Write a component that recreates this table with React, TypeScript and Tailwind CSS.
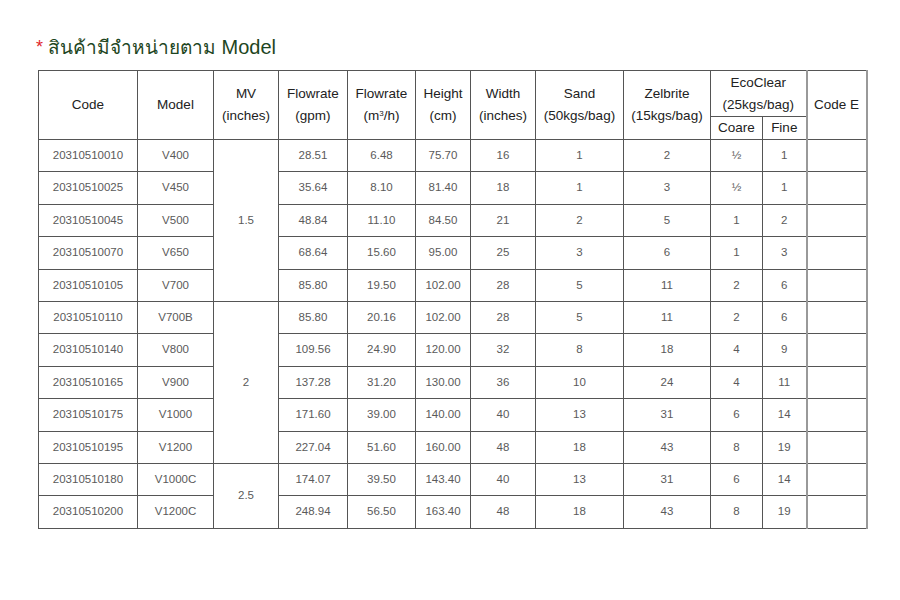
import React from 'react';

type Row = {
  code: string;
  model: string;
  gpm: string;
  m3h: string;
  height: string;
  width: string;
  sand: string;
  zel: string;
  coare: string;
  fine: string;
};

const ROWS: Row[] = [
  { code: '20310510010', model: 'V400', gpm: '28.51', m3h: '6.48', height: '75.70', width: '16', sand: '1', zel: '2', coare: '½', fine: '1' },
  { code: '20310510025', model: 'V450', gpm: '35.64', m3h: '8.10', height: '81.40', width: '18', sand: '1', zel: '3', coare: '½', fine: '1' },
  { code: '20310510045', model: 'V500', gpm: '48.84', m3h: '11.10', height: '84.50', width: '21', sand: '2', zel: '5', coare: '1', fine: '2' },
  { code: '20310510070', model: 'V650', gpm: '68.64', m3h: '15.60', height: '95.00', width: '25', sand: '3', zel: '6', coare: '1', fine: '3' },
  { code: '20310510105', model: 'V700', gpm: '85.80', m3h: '19.50', height: '102.00', width: '28', sand: '5', zel: '11', coare: '2', fine: '6' },
  { code: '20310510110', model: 'V700B', gpm: '85.80', m3h: '20.16', height: '102.00', width: '28', sand: '5', zel: '11', coare: '2', fine: '6' },
  { code: '20310510140', model: 'V800', gpm: '109.56', m3h: '24.90', height: '120.00', width: '32', sand: '8', zel: '18', coare: '4', fine: '9' },
  { code: '20310510165', model: 'V900', gpm: '137.28', m3h: '31.20', height: '130.00', width: '36', sand: '10', zel: '24', coare: '4', fine: '11' },
  { code: '20310510175', model: 'V1000', gpm: '171.60', m3h: '39.00', height: '140.00', width: '40', sand: '13', zel: '31', coare: '6', fine: '14' },
  { code: '20310510195', model: 'V1200', gpm: '227.04', m3h: '51.60', height: '160.00', width: '48', sand: '18', zel: '43', coare: '8', fine: '19' },
  { code: '20310510180', model: 'V1000C', gpm: '174.07', m3h: '39.50', height: '143.40', width: '40', sand: '13', zel: '31', coare: '6', fine: '14' },
  { code: '20310510200', model: 'V1200C', gpm: '248.94', m3h: '56.50', height: '163.40', width: '48', sand: '18', zel: '43', coare: '8', fine: '19' },
];

// MV value spans groups of rows
const MV_SPANS: Record<number, { value: string; span: number }> = {
  0: { value: '1.5', span: 5 },
  5: { value: '2', span: 5 },
  10: { value: '2.5', span: 2 },
};

const th = 'border border-[#555] font-normal text-[13.5px] leading-[22px] text-[#222] text-center align-middle';
const td = 'border border-[#555] text-[11.5px] text-[#5a5a5a] text-center align-middle';

export default function App() {
  return (
    <div
      className="w-[900px] h-[600px] bg-white pt-[33px] pl-[36px]"
      style={{ fontFamily: '"Liberation Sans", "Noto Sans", "DejaVu Sans", sans-serif' }}
    >
      <h1 className="text-[19px] leading-[28px] text-[#1e4622] font-normal">
        <span className="text-[#e0262b] text-[18px] align-top">*</span> สินค้ามีจำหน่ายตาม <span className="text-[20px]">Model</span>
      </h1>

      <table className="mt-[8px] ml-[2px] border-collapse table-fixed w-[828px]">
        <colgroup>
          <col className="w-[99px]" />
          <col className="w-[76px]" />
          <col className="w-[65px]" />
          <col className="w-[69px]" />
          <col className="w-[68px]" />
          <col className="w-[55px]" />
          <col className="w-[65px]" />
          <col className="w-[88px]" />
          <col className="w-[87px]" />
          <col className="w-[52px]" />
          <col className="w-[44px]" />
          <col className="w-[60px]" />
        </colgroup>
        <thead>
          <tr className="h-[45px]">
            <th rowSpan={2} className={th}>Code</th>
            <th rowSpan={2} className={th}>Model</th>
            <th rowSpan={2} className={th}>MV<br />(inches)</th>
            <th rowSpan={2} className={th}>Flowrate<br />(gpm)</th>
            <th rowSpan={2} className={th}>Flowrate<br />(m<sup className="text-[8px]">3</sup>/h)</th>
            <th rowSpan={2} className={th}>Height<br />(cm)</th>
            <th rowSpan={2} className={th}>Width<br />(inches)</th>
            <th rowSpan={2} className={th}>Sand<br />(50kgs/bag)</th>
            <th rowSpan={2} className={th}>Zelbrite<br />(15kgs/bag)</th>
            <th colSpan={2} className={`${th} pt-[1px]`}>EcoClear<br />(25kgs/bag)</th>
            <th rowSpan={2} className={`${th} border-l-[#999] border-l-2 border-r-2 border-r-[#999]`}>Code E</th>
          </tr>
          <tr className="h-[23px]">
            <th className={th}>Coare</th>
            <th className={th}>Fine</th>
          </tr>
        </thead>
        <tbody>
          {ROWS.map((r, i) => (
            <tr key={r.code} className="h-[32.4px]">
              <td className={td}>{r.code}</td>
              <td className={td}>{r.model}</td>
              {MV_SPANS[i] && (
                <td rowSpan={MV_SPANS[i].span} className={td}>{MV_SPANS[i].value}</td>
              )}
              <td className={td}>{r.gpm}</td>
              <td className={td}>{r.m3h}</td>
              <td className={td}>{r.height}</td>
              <td className={td}>{r.width}</td>
              <td className={td}>{r.sand}</td>
              <td className={td}>{r.zel}</td>
              <td className={td}>{r.coare}</td>
              <td className={td}>{r.fine}</td>
              <td className={`${td} border-l-[#999] border-l-2 border-r-2 border-r-[#999]`}></td>
            </tr>
          ))}
        </tbody>
      </table>
    </div>
  );
}
